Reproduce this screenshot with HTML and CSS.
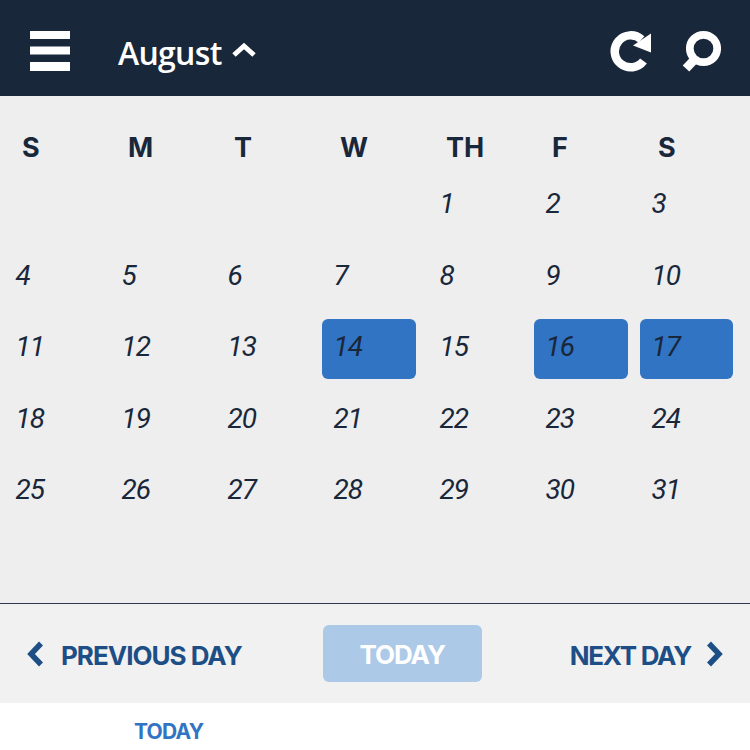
FILE: index.html
```html
<!DOCTYPE html>
<html lang="en">
    <head>
        <meta charset="UTF-8" />
        <meta name="viewport" content="width=device-width, initial-scale=1.0" />
        <title>Calendar</title>
        <link rel="stylesheet" href="styles.css">
    </head>
    <body>
        <header class="top-bar">
            <svg class="menu-icon" width="40" height="40" viewBox="0 0 40 40">
                <rect x="0" y="0" width="40" height="8" fill="#fff" />
                <rect x="0" y="15.5" width="40" height="8" fill="#fff" />
                <rect x="0" y="31" width="40" height="9" fill="#fff" />
            </svg>
            <div class="month">August</div>
            <svg class="month-chevron" width="26" height="16" viewBox="0 0 26 16">
                <path d="M3 13 L13 4 L23 13" fill="none" stroke="#fff" stroke-width="5" />
            </svg>
            <div class="top-actions">
                <svg width="42" height="42" viewBox="0 0 42 42">
                    <path d="M33.5 31 A16 16 0 1 1 31.5 9.5" fill="none" stroke="#fff" stroke-width="8.5" />
                    <path d="M41 3.5 L41 22.5 L23 15.5 Z" fill="#fff" />
                </svg>
                <svg width="40" height="42" viewBox="0 0 40 42">
                    <circle cx="22.5" cy="18.5" r="13.7" fill="none" stroke="#fff" stroke-width="7.7" />
                    <path d="M14 29 L5 38.5" stroke="#fff" stroke-width="9" />
                </svg>
            </div>
        </header>

        <main class="calendar">
            <div class="week-head">
                <span>S</span>
                <span>M</span>
                <span>T</span>
                <span>W</span>
                <span>TH</span>
                <span>F</span>
                <span>S</span>
            </div>
            <div class="days">
                <div class="day"></div>
                <div class="day"></div>
                <div class="day"></div>
                <div class="day"></div>
                <div class="day">1</div>
                <div class="day">2</div>
                <div class="day">3</div>
                <div class="day">4</div>
                <div class="day">5</div>
                <div class="day">6</div>
                <div class="day">7</div>
                <div class="day">8</div>
                <div class="day">9</div>
                <div class="day">10</div>
                <div class="day">11</div>
                <div class="day">12</div>
                <div class="day">13</div>
                <div class="day selected">14</div>
                <div class="day">15</div>
                <div class="day selected">16</div>
                <div class="day selected">17</div>
                <div class="day">18</div>
                <div class="day">19</div>
                <div class="day">20</div>
                <div class="day">21</div>
                <div class="day">22</div>
                <div class="day">23</div>
                <div class="day">24</div>
                <div class="day">25</div>
                <div class="day">26</div>
                <div class="day">27</div>
                <div class="day">28</div>
                <div class="day">29</div>
                <div class="day">30</div>
                <div class="day">31</div>
            </div>
        </main>

        <div class="day-nav">
            <a class="nav-link nav-prev">
                <svg width="18" height="26" viewBox="0 0 18 26">
                    <path d="M15 2.5 L5 13 L15 23.5" fill="none" stroke="#1d4e85" stroke-width="5.5" />
                </svg>
                <span class="nav-text">PREVIOUS DAY</span>
            </a>
            <button class="today-button">TODAY</button>
            <a class="nav-link nav-next">
                <span class="nav-text">NEXT DAY</span>
                <svg width="18" height="26" viewBox="0 0 18 26">
                    <path d="M3 2.5 L13 13 L3 23.5" fill="none" stroke="#1d4e85" stroke-width="5.5" />
                </svg>
            </a>
        </div>

        <div class="tab-bar">
            <span class="tab-label">TODAY</span>
        </div>
    </body>
</html>
```

FILE: styles.css
```css
html,
body {
    height: 750px;
    overflow: hidden;
}

body {
    margin: 0;
    background: white;
    color: #19273a;
    font-family: Inter, "Liberation Sans", sans-serif;
}

.top-bar {
    display: flex;
    align-items: center;
    height: 96px;
    padding: 0 29px 0 30px;
    box-sizing: border-box;
    background: #19273a;
    color: white;
}

.menu-icon {
    margin-top: 5px;
}

.month {
    margin-left: 48px;
    margin-top: 9px;
    font-family: "Open Sans", sans-serif;
    font-size: 32px;
    font-weight: 600;
    letter-spacing: -0.7px;
}

.month-chevron {
    margin-left: 9px;
    margin-top: 4px;
}

.top-actions {
    display: flex;
    gap: 29px;
    margin-left: auto;
    margin-top: 5px;
}

.calendar {
    height: 508px;
    padding-left: 4px;
    box-sizing: border-box;
    background: #eeeeee;
    border-bottom: 1px solid #2c3a4c;
}

.week-head,
.days {
    display: grid;
    grid-template-columns: repeat(6, 94px) 93px;
    column-gap: 12px;
}

.week-head {
    padding-top: 35px;
    font-size: 27px;
    font-weight: 700;
    line-height: 34px;
}

.week-head span {
    padding-left: 18px;
}

.days {
    grid-auto-rows: 60px;
    row-gap: 11.5px;
    margin-top: 11px;
}

.day {
    padding: 13px 0 0 11.5px;
    font-family: Roboto, sans-serif;
    font-size: 28px;
    font-style: italic;
    line-height: 30px;
    letter-spacing: -1px;
}

.selected {
    background: #3274c4;
    border-radius: 6px;
}

.day-nav {
    display: flex;
    align-items: center;
    justify-content: space-between;
    height: 99px;
    padding: 0 26px;
    box-sizing: border-box;
    background: #f1f1f1;
}

.nav-link {
    display: flex;
    align-items: center;
    color: #1d4e85;
    font-size: 26px;
    font-weight: 700;
    letter-spacing: -1px;
}

.nav-prev {
    gap: 17px;
}

.nav-next {
    gap: 15px;
    letter-spacing: -1.25px;
}

.nav-text {
    margin-top: 4px;
}

.today-button {
    width: 159px;
    height: 57px;
    margin-right: 7px;
    padding-top: 2px;
    border: none;
    border-radius: 6px;
    background: #adc9e8;
    color: white;
    font-family: inherit;
    font-size: 26px;
    font-weight: 700;
    letter-spacing: -1px;
}

.tab-bar {
    height: 47px;
    padding-left: 134px;
}

.tab-label {
    color: #3274c4;
    font-size: 21px;
    font-weight: 700;
    letter-spacing: -0.8px;
    line-height: 58px;
}
```
